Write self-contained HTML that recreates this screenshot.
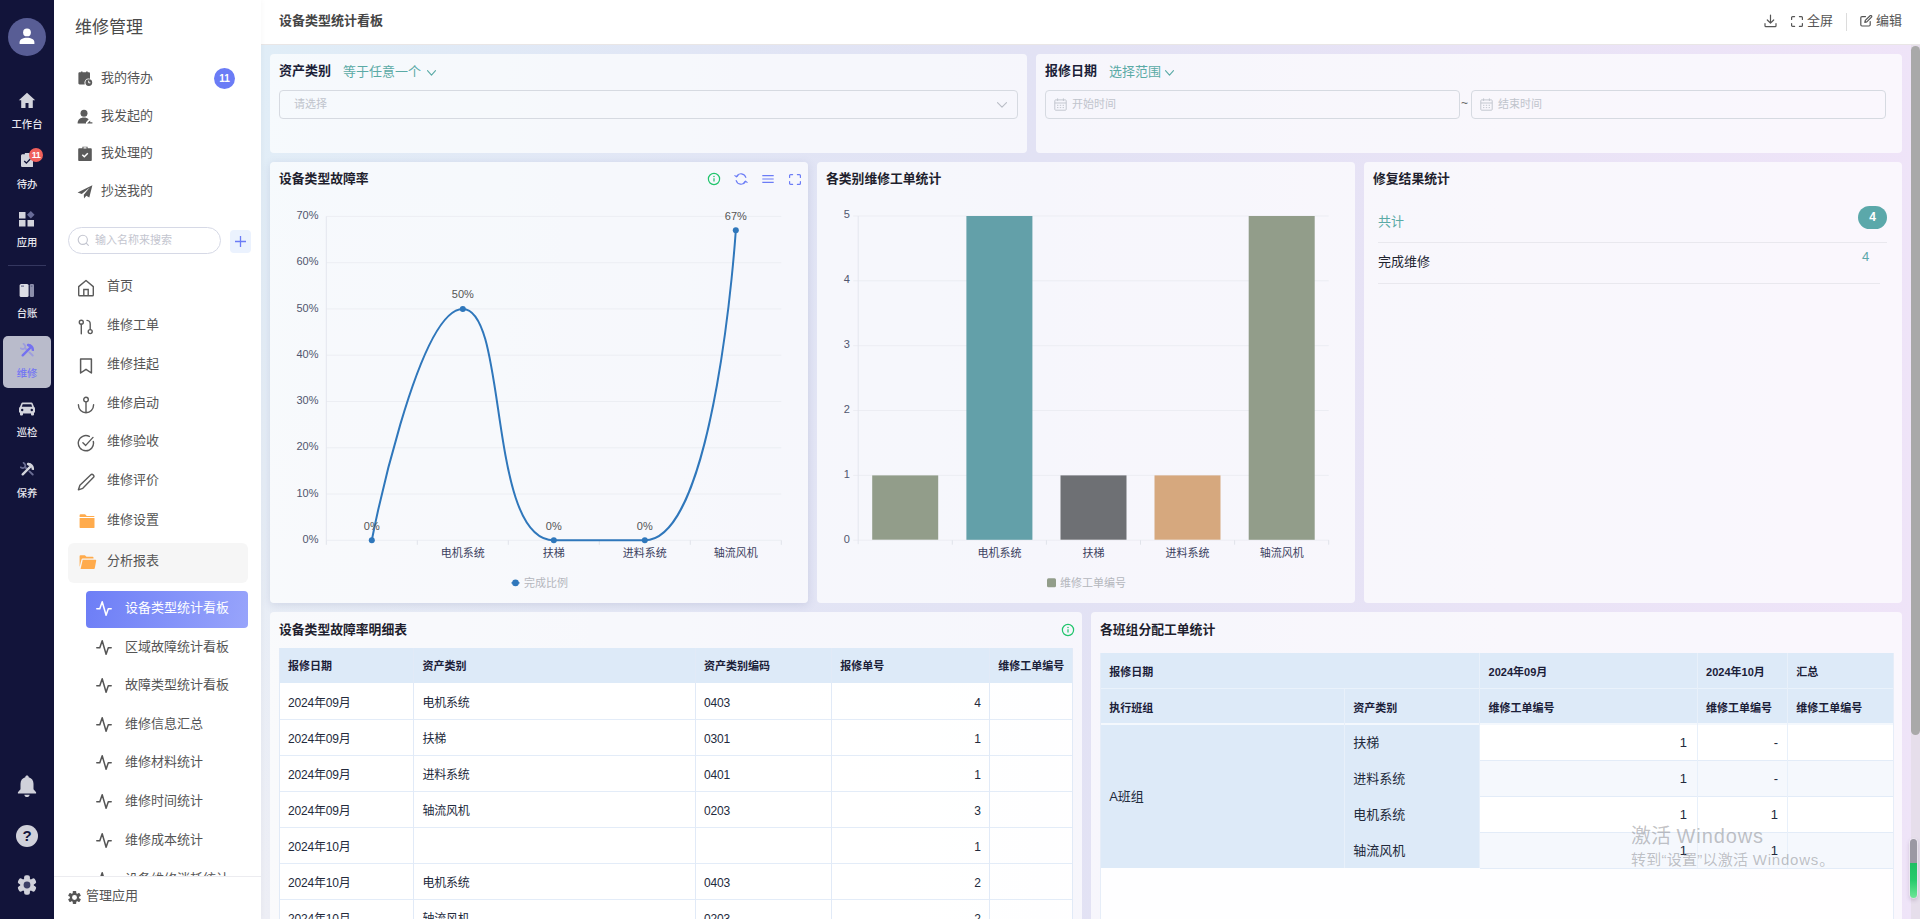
<!DOCTYPE html>
<html lang="zh-CN">
<head>
<meta charset="utf-8">
<title>设备类型统计看板</title>
<style>
*{box-sizing:border-box;margin:0;padding:0}
html,body{width:1920px;height:919px;overflow:hidden;background:#fff}
body{font-family:"Liberation Sans","Noto Sans CJK SC",sans-serif;font-size:13px;color:#333;position:relative}
.abs{position:absolute}
/* dark rail */
#rail{position:absolute;left:0;top:0;width:54px;height:919px;background:#12143a}
#rail .it{position:absolute;left:0;width:54px;text-align:center;color:#e6e6ee;font-size:10.3px;line-height:14px;font-weight:500}
#rail svg{display:block;margin:0 auto}
/* side menu */
#side{position:absolute;left:54px;top:0;width:207px;height:919px;background:#fff;box-shadow:1px 0 5px rgba(0,0,0,.03);z-index:3}
#side .ttl{position:absolute;left:21px;top:15px;font-size:17px;color:#4a4a4a;line-height:26px}
#side .q{position:absolute;left:23px;height:24px;line-height:24px;font-size:13px;color:#555}
#side .q svg{position:absolute;left:-.5px;top:5px}
#side .q span{position:absolute;left:24px;top:0;white-space:nowrap}
#side .m{position:absolute;left:24px;height:24px;line-height:24px;font-size:13px;color:#555;white-space:nowrap}
#side .m svg{position:absolute;left:-1px;top:4.500px}
#side .m span{position:absolute;left:29px;top:0}
#side .s{position:absolute;left:42px;height:24px;line-height:24px;font-size:13px;color:#555;white-space:nowrap}
#side .s svg{position:absolute;left:0;top:3.500px}
#side .s span{position:absolute;left:29px;top:0}
/* main */
#hdr{position:absolute;left:261px;top:0;width:1659px;height:45px;background:#fff;border-bottom:1px solid #e9e6e6}
#main{position:absolute;left:261px;top:45px;width:1659px;height:874px;background:linear-gradient(90deg,rgba(225,226,244,0) 0%,rgba(225,226,244,.75) 30%,rgba(226,226,244,1) 47%,#e9e3f6 75%,#efe4f8 100%),linear-gradient(180deg,#e0edf7 0%,#e6edf6 50%,#edeef5 100%);overflow:hidden}
.card{position:absolute;border-radius:4px;background:rgba(255,255,255,.7)}
.ct{position:absolute;font-size:12.8px;font-weight:bold;color:#1f1f2e;line-height:18px;white-space:nowrap}
#c{position:absolute;left:0;top:0;width:1920px;height:919px;overflow:hidden}
.lbl{position:absolute;font-size:13px;font-weight:bold;color:#1b1e38;line-height:20px;white-space:nowrap}
.lk{position:absolute;font-size:13px;color:#5aaaa6;line-height:20px;white-space:nowrap}
.inp{position:absolute;height:29px;border:1px solid #d6dae1;border-radius:4px}
.ph{position:absolute;font-size:11px;line-height:18px;color:#c0c4cc;white-space:nowrap}
.th{position:absolute;font-size:11px;font-weight:bold;color:#1b2038;line-height:18px;white-space:nowrap}
.td{position:absolute;font-size:12px;color:#232a3c;line-height:18px;white-space:nowrap;letter-spacing:-.2px}
.td2{position:absolute;font-size:13px;color:#232a3c;line-height:20px;white-space:nowrap}
</style>
</head>
<body>
<div id="rail">
  <div class="abs" style="left:8px;top:18px;width:38px;height:38px;border-radius:50%;background:#585d95"></div>
  <svg class="abs" style="left:17px;top:26px" width="20" height="20" viewBox="0 0 20 20"><circle cx="10" cy="6.4" r="3.9" fill="#fff"/><path d="M2.6 18v-1.6c0-3 3.3-4.6 7.4-4.6s7.4 1.600 7.400 4.600V18z" fill="#fff"/></svg>
  <!-- home -->
  <svg class="abs" style="left:18px;top:92px" width="18" height="17" viewBox="0 0 18 17"><path d="M9 .8L.8 8.300h2.400V16h4.300v-5h3V16h4.300V8.300h2.400z" fill="#d3d4dc"/></svg>
  <div class="it" style="top:118px">工作台</div>
  <!-- todo -->
  <svg class="abs" style="left:20.500px;top:153px" width="12.500" height="14.300" viewBox="0 0 14 16"><path d="M4.300 0h5.400v1.500h2.600c.9 0 1.700.8 1.700 1.700v11c0 .9-.8 1.700-1.700 1.700H1.700C.8 15.900 0 15.100 0 14.200v-11c0-.9.8-1.700 1.700-1.700h2.600z" fill="#d3d4dc"/><path d="M3.600 9l2.400 2.300 4.400-4.600" fill="none" stroke="#12143a" stroke-width="1.500"/></svg>
  <div class="abs" style="left:29px;top:148px;width:14px;height:14px;border-radius:50%;background:#f0605b;color:#fff;font-size:9px;line-height:14px;text-align:center;font-weight:bold;letter-spacing:-.5px">11</div>
  <div class="it" style="top:178px">待办</div>
  <!-- apps -->
  <svg class="abs" style="left:19px;top:211px" width="16" height="16" viewBox="0 0 16 16"><rect x="0" y="1" width="6.500" height="6.500" fill="#d3d4dc"/><rect x="0" y="9" width="6.500" height="6.500" fill="#d3d4dc"/><rect x="8.500" y="9" width="6.500" height="6.500" fill="#d3d4dc"/><path d="M11.800 0l3.800 3.800-3.800 3.800L8 3.800z" fill="#686c98"/></svg>
  <div class="it" style="top:236px">应用</div>
  <div class="abs" style="left:8px;top:265px;width:38px;height:1px;background:#34375f"></div>
  <!-- ledger -->
  <svg class="abs" style="left:19px;top:284px" width="16" height="13" viewBox="0 0 16 13"><rect x=".6" y="0" width="9" height="13" rx="1.500" fill="#dcdde4"/><rect x="2" y="1.600" width="3" height="1" fill="#555a80"/><rect x="10.800" y="0" width="4.200" height="13" rx="1.200" fill="#8c8fab"/><rect x="11.800" y="1.600" width="1.600" height="1" fill="#555a80"/></svg>
  <div class="it" style="top:307px">台账</div>
  <!-- active -->
  <div class="abs" style="left:3px;top:336px;width:48px;height:52px;border-radius:5px;background:#b9bbcb"></div>
  <svg class="abs" style="left:20px;top:343px" width="14" height="14" viewBox="0 0 14 14"><g fill="none" stroke-linecap="round"><path d="M3.500 .8c1.700 1.300 2.300 2.900 1.400 4.300-1 1.300-2.600 1.300-4.300 .2" stroke="#9d9dde" stroke-width="1.700"/><path d="M5.200 5.300l1.600 1.500M9.500 9.400l3.200 3.100" stroke="#9d9dde" stroke-width="1.900"/><path d="M2.700 12.400L10.400 4.600" stroke="#7471f0" stroke-width="2.300"/><path d="M8.300 2c2.600.4 4.700 2.600 4.600 5.900" stroke="#7471f0" stroke-width="2.400" stroke-linecap="butt"/><path d="M8.100 2.100l1.200.3" stroke="#7471f0" stroke-width="2.600"/></g></svg>
  <div class="it" style="top:367px;color:#7577f2">维修</div>
  <!-- car -->
  <svg class="abs" style="left:19px;top:402px" width="16" height="14" viewBox="0 0 16 14"><path d="M3.600.6h8.800c.6 0 1.100.3 1.300.9L15 4.800c.6.300 1 .9 1 1.600v4.200h-1v2c0 .5-.4.900-.9.900h-1.200c-.5 0-.9-.4-.9-.9v-1H4v1c0 .5-.4.900-.9.900H1.900c-.5 0-.9-.4-.9-.9v-2H0V6.400c0-.7.400-1.300 1-1.600l1.300-3.300c.2-.6.700-.9 1.300-.9zM3.700 2.200L2.800 4.700h10.400l-.9-2.500z" fill="#d3d4dc" fill-rule="evenodd"/><circle cx="3.200" cy="8" r="1.200" fill="#12143a"/><circle cx="12.800" cy="8" r="1.200" fill="#12143a"/></svg>
  <div class="it" style="top:426px">巡检</div>
  <!-- maintain -->
  <svg class="abs" style="left:20px;top:462px" width="14" height="14" viewBox="0 0 14 14"><g fill="none" stroke-linecap="round"><path d="M3.500 .8c1.700 1.300 2.300 2.900 1.400 4.300-1 1.300-2.600 1.300-4.300 .2" stroke="#6a6d93" stroke-width="1.700"/><path d="M5.200 5.300l1.600 1.500M9.500 9.400l3.200 3.100" stroke="#6a6d93" stroke-width="1.900"/><path d="M2.700 12.400L10.400 4.600" stroke="#d3d4dc" stroke-width="2.300"/><path d="M8.300 2c2.600.4 4.700 2.600 4.600 5.900" stroke="#d3d4dc" stroke-width="2.400" stroke-linecap="butt"/><path d="M8.100 2.100l1.200.3" stroke="#d3d4dc" stroke-width="2.600"/></g></svg>
  <div class="it" style="top:487px">保养</div>
  <!-- bell -->
  <svg class="abs" style="left:17px;top:775px" width="20" height="23" viewBox="0 0 20 23"><path d="M10 .6c1 0 1.700.7 1.700 1.600 3 .8 4.800 3.300 4.800 6.500v5.600l2.600 3v1.300H.9v-1.300l2.600-3V8.700c0-3.200 1.800-5.700 4.800-6.500C8.300 1.300 9 .6 10 .6z" fill="#d0d1da"/><path d="M7.300 19.800h5.400c-.3 1.400-1.300 2.300-2.700 2.300s-2.400-.9-2.700-2.300z" fill="#d0d1da"/></svg>
  <!-- help -->
  <div class="abs" style="left:16px;top:825px;width:22px;height:22px;border-radius:50%;background:#d0d1da;color:#12143a;font-size:15px;font-weight:bold;line-height:22px;text-align:center">?</div>
  <!-- gear -->
  <svg class="abs" style="left:17px;top:875px" width="20" height="20" viewBox="-10 -10 20 20"><g fill="#d0d1da"><circle r="6.800"/><rect x="-2.900" y="-9.700" width="5.800" height="6" rx="2" transform="rotate(0)"/><rect x="-2.900" y="-9.700" width="5.800" height="6" rx="2" transform="rotate(60)"/><rect x="-2.900" y="-9.700" width="5.800" height="6" rx="2" transform="rotate(120)"/><rect x="-2.900" y="-9.700" width="5.800" height="6" rx="2" transform="rotate(180)"/><rect x="-2.900" y="-9.700" width="5.800" height="6" rx="2" transform="rotate(240)"/><rect x="-2.900" y="-9.700" width="5.800" height="6" rx="2" transform="rotate(300)"/></g><circle r="3.400" fill="#3c3f66"/></svg>
</div>
<div id="side"><div class="ttl">维修管理</div>
<div class="q" style="top:66px"><svg width="16" height="16" viewBox="0 0 16 16"><path d="M2.600 1.200h1.300V.5h1.600v.7h3.600V.5h1.600v.7h1.100c.7 0 1.200.5 1.200 1.200v5.300a4.300 4.300 0 0 0-5.300 5.800H2.600c-.7 0-1.200-.5-1.200-1.200V2.400c0-.7.500-1.200 1.200-1.200z" fill="#5a5a5a"/><circle cx="11.800" cy="11.600" r="3.400" fill="#5a5a5a"/><path d="M11.700 9.700v2.100h1.700" fill="none" stroke="#fff" stroke-width="1"/></svg><span>我的待办</span></div>
<div class="abs" style="left:160px;top:68px;width:21px;height:21px;border-radius:50%;background:#6b7cf6;color:#fff;font-size:10px;font-weight:bold;line-height:21px;text-align:center">11</div>
<div class="q" style="top:104px"><svg width="16" height="16" viewBox="0 0 16 16"><circle cx="7" cy="4.200" r="3.500" fill="#5a5a5a"/><path d="M.6 14.600c0-4 2.800-6 6.400-6 1.900 0 3.500.6 4.700 1.700L9 13.300v1.300z" fill="#5a5a5a"/><path d="M10 14.600l3.200-3 0 1.600h2.200v1.400z" fill="#5a5a5a"/></svg><span>我发起的</span></div>
<div class="q" style="top:141px"><svg width="16" height="16" viewBox="0 0 16 16"><path d="M5.400.8h5.200v1.500h3.100c.6 0 1.100.5 1.100 1.100v10.600c0 .6-.5 1.100-1.100 1.100H2.300c-.6 0-1.100-.5-1.100-1.100V3.400c0-.6.500-1.100 1.100-1.100h3.100z" fill="#5a5a5a"/><rect x="6.500" y="1.300" width="3" height="1.200" fill="#fff"/><path d="M5.300 8.800l2 2 3.500-3.600" fill="none" stroke="#fff" stroke-width="1.500"/></svg><span>我处理的</span></div>
<div class="q" style="top:179px"><svg width="16" height="16" viewBox="0 0 16 16"><path d="M15.400 1.200L.6 8.600l4.200 1.300 8-6.400-6 7.300.2 3.600 2.300-2.600 3 1.600z" fill="#5a5a5a"/></svg><span>抄送我的</span></div>
<div class="abs" style="left:14px;top:227px;width:153px;height:27px;border:1px solid #d6d9e6;border-radius:14px"></div>
<svg class="abs" style="left:23px;top:234px" width="13" height="13" viewBox="0 0 13 13"><circle cx="5.800" cy="5.800" r="4.600" fill="none" stroke="#c3c5cf" stroke-width="1.100"/><path d="M9.200 9.200l2.200 2.200" stroke="#c3c5cf" stroke-width="1.100" stroke-linecap="round"/></svg>
<div class="abs" style="left:41px;top:231px;font-size:11px;line-height:18px;color:#c3c5cf;white-space:nowrap">输入名称来搜索</div>
<div class="abs" style="left:176px;top:230px;width:21px;height:23px;border-radius:4px;background:#ebf2fe"></div>
<svg class="abs" style="left:181px;top:236px" width="11" height="11" viewBox="0 0 11 11"><path d="M5.500 0v11M0 5.500h11" stroke="#6b7cf6" stroke-width="1.300"/></svg>
<div class="m" style="top:274px"><svg width="18" height="18" viewBox="0 0 18 18"><path d="M1.700 7.600L9 1.500l7.300 6.100v8.300a.9.900 0 0 1-.9.900H2.600a.9.900 0 0 1-.9-.9z" fill="none" stroke="#5a5a5a" stroke-width="1.400" stroke-linejoin="round"/><path d="M6.800 16.500v-6h4.400v6" fill="none" stroke="#5a5a5a" stroke-width="1.400"/></svg><span>首页</span></div>
<div class="m" style="top:313px"><svg width="18" height="18" viewBox="0 0 18 18"><g fill="none" stroke="#5a5a5a" stroke-width="1.400" stroke-linecap="round"><circle cx="4.300" cy="4.200" r="2"/><path d="M4.300 6.300v9.500"/><circle cx="13.200" cy="13.600" r="2"/><path d="M10 2.400c2.300.2 3.200 1.400 3.200 3.600v5.500"/></g></svg><span>维修工单</span></div>
<div class="m" style="top:352px"><svg width="18" height="18" viewBox="0 0 18 18"><path d="M3.600 2h10.800v14l-5.400-3.700L3.600 16z" fill="none" stroke="#5a5a5a" stroke-width="1.500" stroke-linejoin="round"/></svg><span>维修挂起</span></div>
<div class="m" style="top:391px"><svg width="18" height="18" viewBox="0 0 18 18"><g fill="none" stroke="#5a5a5a" stroke-width="1.400" stroke-linecap="round"><circle cx="9" cy="3.600" r="2.300"/><path d="M9 6v10.800M1.400 8.800c0 4.600 3.400 8 7.600 8s7.600-3.400 7.600-8"/></g></svg><span>维修启动</span></div>
<div class="m" style="top:429px"><svg width="18" height="18" viewBox="0 0 18 18"><g fill="none" stroke="#5a5a5a" stroke-width="1.400" stroke-linecap="round" stroke-linejoin="round"><path d="M16.300 7.500A7.600 7.600 0 1 1 12.300 2.400"/><path d="M5.900 8.800l2.800 2.600 7.300-8"/></g></svg><span>维修验收</span></div>
<div class="m" style="top:468px"><svg width="18" height="18" viewBox="0 0 18 18"><path d="M1.400 16.800l1.500-4.600L13.600 1.900a1.900 1.900 0 0 1 2.700 2.700L5.800 15.300z" fill="none" stroke="#5a5a5a" stroke-width="1.400" stroke-linejoin="round"/></svg><span>维修评价</span></div>
<div class="m" style="top:508px"><svg style="left:0;top:3.500px" width="18" height="18" viewBox="0 0 18 18"><path d="M1.600 3.200c0-.5.400-.9.900-.9h4.600l1.600 1.600h6.900c.5 0 .9.400.9.900V5H1.600z" fill="#ffab4c"/><path d="M1.600 6h14.900v9.200c0 .5-.4.900-.9.900H2.500c-.5 0-.9-.4-.9-.9z" fill="#ffab4c"/></svg><span>维修设置</span></div>
<div class="abs" style="left:14px;top:543px;width:180px;height:40px;border-radius:6px;background:#f6f6f6"></div>
<div class="m" style="top:549px"><svg style="left:0;top:3.500px" width="19" height="18" viewBox="0 0 19 18"><path d="M1.600 3.100c0-.5.400-.9.900-.9h4.400l1.600 1.500h6.100c.5 0 .9.400.9.900v1H4.800c-.6 0-1.100.4-1.300 1L1.600 14z" fill="#ffab4c"/><path d="M4.700 6.700h12.600c.6 0 1 .5.900 1.100l-1.400 7.500c-.1.500-.5.800-1 .8H2.600z" fill="#ffab4c"/></svg><span>分析报表</span></div>
<div class="abs" style="left:32px;top:591px;width:162px;height:37px;border-radius:4px;background:linear-gradient(100deg,#6d7ef6 0%,#8493f9 55%,#98a4fb 100%)"></div>
<div class="s" style="top:596px;color:#fff"><svg width="16" height="17" viewBox="0 0 16 17"><path d="M.8 8.800h3L6.200 1.700l3.900 13.600 2.200-6.500h2.900" fill="none" stroke="#fff" stroke-width="1.500" stroke-linejoin="round" stroke-linecap="round"/></svg><span>设备类型统计看板</span></div>
<div class="s" style="top:635px"><svg width="16" height="17" viewBox="0 0 16 17"><path d="M.8 8.800h3L6.200 1.700l3.900 13.600 2.200-6.500h2.900" fill="none" stroke="#555" stroke-width="1.500" stroke-linejoin="round" stroke-linecap="round"/></svg><span>区域故障统计看板</span></div>
<div class="s" style="top:673px"><svg width="16" height="17" viewBox="0 0 16 17"><path d="M.8 8.800h3L6.200 1.700l3.900 13.600 2.200-6.500h2.900" fill="none" stroke="#555" stroke-width="1.500" stroke-linejoin="round" stroke-linecap="round"/></svg><span>故障类型统计看板</span></div>
<div class="s" style="top:712px"><svg width="16" height="17" viewBox="0 0 16 17"><path d="M.8 8.800h3L6.200 1.700l3.900 13.600 2.200-6.500h2.900" fill="none" stroke="#555" stroke-width="1.500" stroke-linejoin="round" stroke-linecap="round"/></svg><span>维修信息汇总</span></div>
<div class="s" style="top:750px"><svg width="16" height="17" viewBox="0 0 16 17"><path d="M.8 8.800h3L6.200 1.700l3.900 13.600 2.200-6.500h2.900" fill="none" stroke="#555" stroke-width="1.500" stroke-linejoin="round" stroke-linecap="round"/></svg><span>维修材料统计</span></div>
<div class="s" style="top:789px"><svg width="16" height="17" viewBox="0 0 16 17"><path d="M.8 8.800h3L6.200 1.700l3.900 13.600 2.200-6.500h2.900" fill="none" stroke="#555" stroke-width="1.500" stroke-linejoin="round" stroke-linecap="round"/></svg><span>维修时间统计</span></div>
<div class="s" style="top:828px"><svg width="16" height="17" viewBox="0 0 16 17"><path d="M.8 8.800h3L6.200 1.700l3.900 13.600 2.200-6.500h2.900" fill="none" stroke="#555" stroke-width="1.500" stroke-linejoin="round" stroke-linecap="round"/></svg><span>维修成本统计</span></div>
<div class="s" style="top:867px"><svg width="16" height="17" viewBox="0 0 16 17"><path d="M.8 8.800h3L6.200 1.700l3.900 13.600 2.200-6.500h2.900" fill="none" stroke="#555" stroke-width="1.500" stroke-linejoin="round" stroke-linecap="round"/></svg><span>设备维修消耗统计</span></div>
<div class="abs" style="left:0;top:876px;width:207px;height:43px;background:#fff;border-top:1px solid #ececf0"></div>
<svg class="abs" style="left:14px;top:891px" width="13" height="13" viewBox="-10 -10 20 20"><g fill="#555"><circle r="7"/><rect x="-2.700" y="-10" width="5.400" height="5" rx="1" transform="rotate(0)"/><rect x="-2.700" y="-10" width="5.400" height="5" rx="1" transform="rotate(60)"/><rect x="-2.700" y="-10" width="5.400" height="5" rx="1" transform="rotate(120)"/><rect x="-2.700" y="-10" width="5.400" height="5" rx="1" transform="rotate(180)"/><rect x="-2.700" y="-10" width="5.400" height="5" rx="1" transform="rotate(240)"/><rect x="-2.700" y="-10" width="5.400" height="5" rx="1" transform="rotate(300)"/></g><circle r="3.800" fill="#fff"/></svg>
<div class="abs" style="left:32px;top:884px;font-size:13px;line-height:24px;color:#555;white-space:nowrap">管理应用</div>
</div>
<div id="hdr"><div class="abs" style="left:18px;top:11px;font-size:13px;font-weight:bold;color:#454545;line-height:20px;white-space:nowrap">设备类型统计看板</div>
<svg class="abs" style="left:1503px;top:14px" width="13" height="14" viewBox="0 0 13 14"><g fill="none" stroke="#555" stroke-width="1.200" stroke-linecap="round" stroke-linejoin="round"><path d="M6.500 1v8M3.300 6l3.200 3.200L9.700 6M1 9.500v2.200c0 .5.400.900.900.900h9.200c.5 0 .9-.4.900-.9V9.500"/></g></svg>
<svg class="abs" style="left:1530px;top:16px" width="12" height="11" viewBox="0 0 12 11"><g fill="none" stroke="#555" stroke-width="1.200" stroke-linecap="round"><path d="M.6 3.400V1.600a1 1 0 0 1 1-1h2M8.400.6h2a1 1 0 0 1 1 1v1.800M11.400 7.600v1.800a1 1 0 0 1-1 1h-2M3.600 10.400h-2a1 1 0 0 1-1-1V7.600"/></g></svg>
<div class="abs" style="left:1546px;top:11px;font-size:13px;color:#555;line-height:20px;white-space:nowrap">全屏</div>
<div class="abs" style="left:1585px;top:13px;width:1px;height:18px;background:#dcdcdc"></div>
<svg class="abs" style="left:1599px;top:15px" width="13" height="12" viewBox="0 0 13 12"><g fill="none" stroke="#555" stroke-width="1.200" stroke-linecap="round" stroke-linejoin="round"><path d="M5.500 1.600H2a1.200 1.200 0 0 0-1.200 1.200v7A1.200 1.200 0 0 0 2 11h7a1.200 1.200 0 0 0 1.200-1.200V6.500"/><path d="M4.800 7.400l.5-2L10.100.7a1 1 0 0 1 1.400 1.400L6.800 6.900z"/></g></svg>
<div class="abs" style="left:1615px;top:11px;font-size:13px;color:#555;line-height:20px;white-space:nowrap">编辑</div>
</div>
<div id="main"></div>
<div id="c">
<div class="card" style="left:270px;top:54px;width:757px;height:99px"></div>
<div class="card" style="left:1036px;top:54px;width:866px;height:99px"></div>
<div class="card" style="left:270px;top:162px;width:538px;height:441px;box-shadow:0 2px 8px rgba(100,110,160,.18)"></div>
<div class="card" style="left:817px;top:162px;width:538px;height:441px"></div>
<div class="card" style="left:1364px;top:162px;width:538px;height:441px"></div>
<div class="card" style="left:270px;top:612px;width:812px;height:320px"></div>
<div class="card" style="left:1091px;top:612px;width:811px;height:320px"></div>
<div class="lbl" style="left:279px;top:61px">资产类别</div>
<div class="lk" style="left:343px;top:62px">等于任意一个</div>
<svg class="abs" style="left:427px;top:70px" width="9" height="6" viewBox="0 0 9 6"><path d="M.5 .7L4.5 5.2L8.5 .7" fill="none" stroke="#5aaaa6" stroke-width="1.1" stroke-linecap="round" stroke-linejoin="round"/></svg>
<div class="inp" style="left:279px;top:90px;width:739px"></div>
<div class="ph" style="left:294px;top:95px">请选择</div>
<svg class="abs" style="left:997px;top:102px" width="10" height="6" viewBox="0 0 10 6"><path d="M.5 .7L5.0 5.2L9.5 .7" fill="none" stroke="#b9bdc6" stroke-width="1.1" stroke-linecap="round" stroke-linejoin="round"/></svg>
<div class="lbl" style="left:1045px;top:61px">报修日期</div>
<div class="lk" style="left:1109px;top:62px">选择范围</div>
<svg class="abs" style="left:1165px;top:70px" width="9" height="6" viewBox="0 0 9 6"><path d="M.5 .7L4.5 5.2L8.5 .7" fill="none" stroke="#5aaaa6" stroke-width="1.1" stroke-linecap="round" stroke-linejoin="round"/></svg>
<div class="inp" style="left:1045px;top:90px;width:415px"></div>
<svg class="abs" style="left:1054px;top:98px" width="13" height="13" viewBox="0 0 13 13"><g fill="none" stroke="#c3c7cf" stroke-width="1"><rect x=".8" y="1.900" width="11.400" height="10.300" rx=".8"/><path d="M.8 5h11.400M3.600 .4v2.600M9.400 .4v2.600"/><path d="M3 7.300h7M3 9.600h7" stroke-dasharray="1.400 1.400"/></g></svg>
<div class="ph" style="left:1072px;top:95px">开始时间</div>
<div class="abs" style="left:1461px;top:94px;font-size:12px;line-height:18px;color:#666">~</div>
<div class="inp" style="left:1471px;top:90px;width:415px"></div>
<svg class="abs" style="left:1480px;top:98px" width="13" height="13" viewBox="0 0 13 13"><g fill="none" stroke="#c3c7cf" stroke-width="1"><rect x=".8" y="1.900" width="11.400" height="10.300" rx=".8"/><path d="M.8 5h11.400M3.600 .4v2.600M9.400 .4v2.600"/><path d="M3 7.300h7M3 9.600h7" stroke-dasharray="1.400 1.400"/></g></svg>
<div class="ph" style="left:1498px;top:95px">结束时间</div>
<div class="ct" style="left:279px;top:170px">设备类型故障率</div>
<div class="ct" style="left:826px;top:170px">各类别维修工单统计</div>
<div class="ct" style="left:1373px;top:170px">修复结果统计</div>
<div class="ct" style="left:279px;top:621px">设备类型故障率明细表</div>
<div class="ct" style="left:1100px;top:621px">各班组分配工单统计</div>
<svg class="abs" style="left:707px;top:172px" width="14" height="14" viewBox="0 0 14 14"><circle cx="7" cy="7" r="5.600" fill="none" stroke="#1fc46b" stroke-width="1.200"/><path d="M7 6.200v3.400" stroke="#1fc46b" stroke-width="1.200"/><circle cx="7" cy="4.500" r=".75" fill="#1fc46b"/></svg>
<svg class="abs" style="left:734px;top:172px" width="14" height="14" viewBox="0 0 14 14"><g fill="none" stroke="#6b7cf6" stroke-width="1.200" stroke-linecap="round" stroke-linejoin="round"><path d="M11.800 5.400A5 5 0 0 0 2.600 4.400M2.200 8.600a5 5 0 0 0 9.200 1"/><path d="M.9 3.600l1.600 1.300 1.500-1.500M13.100 10.400l-1.600-1.300-1.500 1.500"/></g></svg>
<svg class="abs" style="left:762px;top:174px" width="12" height="10" viewBox="0 0 12 10"><path d="M.3 1.600h11.400M.3 5h11.400M.3 8.400h11.400" stroke="#6b7cf6" stroke-width="1.100"/></svg>
<svg class="abs" style="left:789px;top:174px" width="12" height="11" viewBox="0 0 12 11"><g fill="none" stroke="#6b7cf6" stroke-width="1.200" stroke-linecap="round"><path d="M.6 3.400V1.600a1 1 0 0 1 1-1h2M8.400.6h2a1 1 0 0 1 1 1v1.800M11.400 7.600v1.800a1 1 0 0 1-1 1h-2M3.600 10.400h-2a1 1 0 0 1-1-1V7.600"/></g></svg>
<svg class="abs" style="left:1061px;top:623px" width="14" height="14" viewBox="0 0 14 14"><circle cx="7" cy="7" r="5.600" fill="none" stroke="#1fc46b" stroke-width="1.200"/><path d="M7 6.200v3.400" stroke="#1fc46b" stroke-width="1.200"/><circle cx="7" cy="4.500" r=".75" fill="#1fc46b"/></svg>
<svg class="abs" style="left:270px;top:162px" width="538" height="441" viewBox="270 162 538 441" font-family="Liberation Sans, Noto Sans CJK SC, sans-serif"><path d="M326.3 540.3H781.300" stroke="#eceef3" stroke-width="1"/><text x="318.500" y="542.9" font-size="11" fill="#50566e" text-anchor="end">0%</text><path d="M326.3 494.0H781.300" stroke="#eceef3" stroke-width="1"/><text x="318.500" y="496.6" font-size="11" fill="#50566e" text-anchor="end">10%</text><path d="M326.3 447.8H781.300" stroke="#eceef3" stroke-width="1"/><text x="318.500" y="450.4" font-size="11" fill="#50566e" text-anchor="end">20%</text><path d="M326.3 401.5H781.300" stroke="#eceef3" stroke-width="1"/><text x="318.500" y="404.1" font-size="11" fill="#50566e" text-anchor="end">30%</text><path d="M326.3 355.2H781.300" stroke="#eceef3" stroke-width="1"/><text x="318.500" y="357.8" font-size="11" fill="#50566e" text-anchor="end">40%</text><path d="M326.3 308.9H781.300" stroke="#eceef3" stroke-width="1"/><text x="318.500" y="311.5" font-size="11" fill="#50566e" text-anchor="end">50%</text><path d="M326.3 262.7H781.300" stroke="#eceef3" stroke-width="1"/><text x="318.500" y="265.3" font-size="11" fill="#50566e" text-anchor="end">60%</text><path d="M326.3 216.4H781.300" stroke="#eceef3" stroke-width="1"/><text x="318.500" y="219.0" font-size="11" fill="#50566e" text-anchor="end">70%</text><path d="M326.3 216.4V540.3" stroke="#e4e7ee" stroke-width="1"/><path d="M326.3 540.3v4.500" stroke="#e0e3ea" stroke-width="1"/><path d="M417.3 540.3v4.500" stroke="#e0e3ea" stroke-width="1"/><path d="M508.3 540.3v4.500" stroke="#e0e3ea" stroke-width="1"/><path d="M599.3 540.3v4.500" stroke="#e0e3ea" stroke-width="1"/><path d="M690.3 540.3v4.500" stroke="#e0e3ea" stroke-width="1"/><path d="M781.3 540.3v4.500" stroke="#e0e3ea" stroke-width="1"/><text x="462.8" y="556.700" font-size="11" fill="#3c4160" text-anchor="middle">电机系统</text><text x="553.8" y="556.700" font-size="11" fill="#3c4160" text-anchor="middle">扶梯</text><text x="644.8" y="556.700" font-size="11" fill="#3c4160" text-anchor="middle">进料系统</text><text x="735.8" y="556.700" font-size="11" fill="#3c4160" text-anchor="middle">轴流风机</text><path d="M371.8 540.3C371.8 540.3 417.3 308.9 462.8 308.9C508.3 308.9 487.2 540.3 553.8 540.3C578.2 540.3 624.8 540.3 644.8 540.3C715.8 540.3 735.8 230.3 735.8 230.3" fill="none" stroke="#2f77bb" stroke-width="2" stroke-linejoin="round"/><circle cx="371.8" cy="540.3" r="3" fill="#2f77bb"/><text x="371.8" y="529.7" font-size="11" fill="#555" text-anchor="middle">0%</text><circle cx="462.8" cy="308.9" r="3" fill="#2f77bb"/><text x="462.8" y="298.3" font-size="11" fill="#555" text-anchor="middle">50%</text><circle cx="553.8" cy="540.3" r="3" fill="#2f77bb"/><text x="553.8" y="529.7" font-size="11" fill="#555" text-anchor="middle">0%</text><circle cx="644.8" cy="540.3" r="3" fill="#2f77bb"/><text x="644.8" y="529.7" font-size="11" fill="#555" text-anchor="middle">0%</text><circle cx="735.8" cy="230.3" r="3" fill="#2f77bb"/><text x="735.8" y="219.7" font-size="11" fill="#555" text-anchor="middle">67%</text><path d="M511.500 582.900h8" stroke="#2f77bb" stroke-width="1.500"/><circle cx="515.500" cy="582.900" r="3.300" fill="#2f77bb"/><text x="524" y="586.600" font-size="11" fill="#b4b6bd">完成比例</text></svg>
<svg class="abs" style="left:817px;top:162px" width="538" height="441" viewBox="817 162 538 441" font-family="Liberation Sans, Noto Sans CJK SC, sans-serif"><path d="M853.2 540.2H1328.700" stroke="#ecedf3" stroke-width="1"/><text x="849.800" y="542.6" font-size="11" fill="#50566e" text-anchor="end">0</text><path d="M853.2 475.4H1328.700" stroke="#ecedf3" stroke-width="1"/><text x="849.800" y="477.8" font-size="11" fill="#50566e" text-anchor="end">1</text><path d="M853.2 410.5H1328.700" stroke="#ecedf3" stroke-width="1"/><text x="849.800" y="412.9" font-size="11" fill="#50566e" text-anchor="end">2</text><path d="M853.2 345.7H1328.700" stroke="#ecedf3" stroke-width="1"/><text x="849.800" y="348.1" font-size="11" fill="#50566e" text-anchor="end">3</text><path d="M853.2 280.8H1328.700" stroke="#ecedf3" stroke-width="1"/><text x="849.800" y="283.2" font-size="11" fill="#50566e" text-anchor="end">4</text><path d="M853.2 216.0H1328.700" stroke="#ecedf3" stroke-width="1"/><text x="849.800" y="218.4" font-size="11" fill="#50566e" text-anchor="end">5</text><path d="M858.2 216.0V544.2" stroke="#e4e6ee" stroke-width="1"/><path d="M952.3 540.2v4.500" stroke="#e0e3ea" stroke-width="1"/><path d="M1046.4 540.2v4.500" stroke="#e0e3ea" stroke-width="1"/><path d="M1140.5 540.2v4.500" stroke="#e0e3ea" stroke-width="1"/><path d="M1234.6 540.2v4.500" stroke="#e0e3ea" stroke-width="1"/><path d="M1328.7 540.2v4.500" stroke="#e0e3ea" stroke-width="1"/><rect x="872.2" y="475.4" width="66" height="64.3" fill="#929d8a"/><rect x="966.4" y="216.0" width="66" height="323.8" fill="#63a0a9"/><text x="999.4" y="556.700" font-size="11" fill="#3c4160" text-anchor="middle">电机系统</text><rect x="1060.5" y="475.4" width="66" height="64.3" fill="#6e7074"/><text x="1093.5" y="556.700" font-size="11" fill="#3c4160" text-anchor="middle">扶梯</text><rect x="1154.5" y="475.4" width="66" height="64.3" fill="#d6a87e"/><text x="1187.5" y="556.700" font-size="11" fill="#3c4160" text-anchor="middle">进料系统</text><rect x="1248.7" y="216.0" width="66" height="323.8" fill="#929d8a"/><text x="1281.7" y="556.700" font-size="11" fill="#3c4160" text-anchor="middle">轴流风机</text><rect x="1047" y="578.300" width="9" height="9" rx="1.500" fill="#929d8a"/><text x="1060" y="586.600" font-size="11" fill="#b4b6bd">维修工单编号</text></svg>
<div class="abs" style="left:1378px;top:212px;font-size:13px;line-height:20px;color:#5aaaa6">共计</div>
<div class="abs" style="left:1858px;top:206px;width:29px;height:23px;border-radius:12px;background:#5ba8aa;color:#fff;font-size:12px;font-weight:bold;line-height:23px;text-align:center">4</div>
<div class="abs" style="left:1378px;top:242px;width:509px;height:1px;background:#e9e8ee"></div>
<div class="abs" style="left:1378px;top:252px;font-size:13px;line-height:20px;color:#20232f">完成维修</div>
<div class="abs" style="left:1862px;top:247px;font-size:13px;line-height:20px;color:#5ba8aa">4</div>
<div class="abs" style="left:1378px;top:283px;width:502px;height:1px;background:#e9e8ee"></div>
<div class="abs" style="left:279px;top:648px;width:794px;height:271px;background:rgba(255,255,255,.9)"></div>
<div class="abs" style="left:279px;top:648px;width:794px;height:35px;background:#ddeaf8"></div>
<div class="th" style="left:288.0px;top:657px">报修日期</div>
<div class="th" style="left:422.4px;top:657px">资产类别</div>
<div class="th" style="left:704.0px;top:657px">资产类别编码</div>
<div class="th" style="left:840.3px;top:657px">报修单号</div>
<div class="th" style="left:998.2px;top:657px">维修工单编号</div>
<div class="abs" style="left:279px;top:719px;width:794px;height:1px;background:#e3ecf8"></div>
<div class="td" style="left:288.0px;top:693.5px">2024年09月</div>
<div class="td" style="left:422.4px;top:693.5px">电机系统</div>
<div class="td" style="left:704.0px;top:693.5px">0403</div>
<div class="td" style="left:831.3px;width:149.5px;text-align:right;top:693.5px">4</div>
<div class="abs" style="left:279px;top:755px;width:794px;height:1px;background:#e3ecf8"></div>
<div class="td" style="left:288.0px;top:729.5px">2024年09月</div>
<div class="td" style="left:422.4px;top:729.5px">扶梯</div>
<div class="td" style="left:704.0px;top:729.5px">0301</div>
<div class="td" style="left:831.3px;width:149.5px;text-align:right;top:729.5px">1</div>
<div class="abs" style="left:279px;top:791px;width:794px;height:1px;background:#e3ecf8"></div>
<div class="td" style="left:288.0px;top:765.5px">2024年09月</div>
<div class="td" style="left:422.4px;top:765.5px">进料系统</div>
<div class="td" style="left:704.0px;top:765.5px">0401</div>
<div class="td" style="left:831.3px;width:149.5px;text-align:right;top:765.5px">1</div>
<div class="abs" style="left:279px;top:827px;width:794px;height:1px;background:#e3ecf8"></div>
<div class="td" style="left:288.0px;top:801.5px">2024年09月</div>
<div class="td" style="left:422.4px;top:801.5px">轴流风机</div>
<div class="td" style="left:704.0px;top:801.5px">0203</div>
<div class="td" style="left:831.3px;width:149.5px;text-align:right;top:801.5px">3</div>
<div class="abs" style="left:279px;top:863px;width:794px;height:1px;background:#e3ecf8"></div>
<div class="td" style="left:288.0px;top:837.5px">2024年10月</div>
<div class="td" style="left:831.3px;width:149.5px;text-align:right;top:837.5px">1</div>
<div class="abs" style="left:279px;top:899px;width:794px;height:1px;background:#e3ecf8"></div>
<div class="td" style="left:288.0px;top:873.5px">2024年10月</div>
<div class="td" style="left:422.4px;top:873.5px">电机系统</div>
<div class="td" style="left:704.0px;top:873.5px">0403</div>
<div class="td" style="left:831.3px;width:149.5px;text-align:right;top:873.5px">2</div>
<div class="abs" style="left:279px;top:935px;width:794px;height:1px;background:#e3ecf8"></div>
<div class="td" style="left:288.0px;top:909.5px">2024年10月</div>
<div class="td" style="left:422.4px;top:909.5px">轴流风机</div>
<div class="td" style="left:704.0px;top:909.5px">0203</div>
<div class="td" style="left:831.3px;width:149.5px;text-align:right;top:909.5px">2</div>
<div class="abs" style="left:278.5px;top:648px;width:1px;height:271px;background:#e1eaf7"></div>
<div class="abs" style="left:412.9px;top:648px;width:1px;height:271px;background:#e1eaf7"></div>
<div class="abs" style="left:694.5px;top:648px;width:1px;height:271px;background:#e1eaf7"></div>
<div class="abs" style="left:830.8px;top:648px;width:1px;height:271px;background:#e1eaf7"></div>
<div class="abs" style="left:988.7px;top:648px;width:1px;height:271px;background:#e1eaf7"></div>
<div class="abs" style="left:1072.1px;top:648px;width:1px;height:271px;background:#e1eaf7"></div>
<div class="abs" style="left:1100px;top:653px;width:794px;height:266px;background:rgba(255,255,255,.85)"></div>
<div class="abs" style="left:1100px;top:653px;width:794px;height:71px;background:#ddeaf8"></div>
<div class="abs" style="left:1100px;top:724px;width:379.600px;height:144px;background:#ddeaf8"></div>
<div class="abs" style="left:1100px;top:688px;width:794px;height:1px;background:#eaf2fb"></div>
<div class="abs" style="left:1100px;top:723px;width:794px;height:2px;background:#f4f8fd"></div>
<div class="abs" style="left:1479.600px;top:725px;width:414.300px;height:35px;background:#ffffff"></div>
<div class="abs" style="left:1479.600px;top:760px;width:414.300px;height:1px;background:#e3ecf8"></div>
<div class="abs" style="left:1479.600px;top:761px;width:414.300px;height:35px;background:#f5f8fd"></div>
<div class="abs" style="left:1479.600px;top:796px;width:414.300px;height:1px;background:#e3ecf8"></div>
<div class="abs" style="left:1479.600px;top:797px;width:414.300px;height:35px;background:#ffffff"></div>
<div class="abs" style="left:1479.600px;top:832px;width:414.300px;height:1px;background:#e3ecf8"></div>
<div class="abs" style="left:1479.600px;top:833px;width:414.300px;height:35px;background:#f5f8fd"></div>
<div class="abs" style="left:1479.600px;top:868px;width:414.300px;height:1px;background:#e3ecf8"></div>
<div class="th" style="left:1109.2px;top:663px">报修日期</div>
<div class="th" style="left:1488.6px;top:663px">2024年09月</div>
<div class="th" style="left:1706.1px;top:663px">2024年10月</div>
<div class="th" style="left:1796.3px;top:663px">汇总</div>
<div class="th" style="left:1109.2px;top:699px">执行班组</div>
<div class="th" style="left:1353.3px;top:699px">资产类别</div>
<div class="th" style="left:1488.6px;top:699px">维修工单编号</div>
<div class="th" style="left:1706.1px;top:699px">维修工单编号</div>
<div class="th" style="left:1796.3px;top:699px">维修工单编号</div>
<div class="td2" style="left:1109.2px;top:787px">A班组</div>
<div class="td2" style="left:1353.3px;top:733px">扶梯</div>
<div class="td2" style="left:1479.6px;width:207.4px;text-align:right;top:733px">1</div>
<div class="td2" style="left:1697.1px;width:80.9px;text-align:right;top:733px">-</div>
<div class="td2" style="left:1353.3px;top:769px">进料系统</div>
<div class="td2" style="left:1479.6px;width:207.4px;text-align:right;top:769px">1</div>
<div class="td2" style="left:1697.1px;width:80.9px;text-align:right;top:769px">-</div>
<div class="td2" style="left:1353.3px;top:805px">电机系统</div>
<div class="td2" style="left:1479.6px;width:207.4px;text-align:right;top:805px">1</div>
<div class="td2" style="left:1697.1px;width:80.9px;text-align:right;top:805px">1</div>
<div class="td2" style="left:1353.3px;top:841px">轴流风机</div>
<div class="td2" style="left:1479.6px;width:207.4px;text-align:right;top:841px">1</div>
<div class="td2" style="left:1697.1px;width:80.9px;text-align:right;top:841px">1</div>
<div class="abs" style="left:1343.8px;top:689px;width:1px;height:179px;background:#e8f0fa"></div>
<div class="abs" style="left:1479.1px;top:653px;width:1px;height:215px;background:#e8f0fa"></div>
<div class="abs" style="left:1696.6px;top:653px;width:1px;height:215px;background:#e8f0fa"></div>
<div class="abs" style="left:1786.8px;top:653px;width:1px;height:215px;background:#e8f0fa"></div>
<div class="abs" style="left:1893.4px;top:653px;width:1px;height:266px;background:#e6edf8"></div>
<div class="abs" style="left:1099.7px;top:653px;width:1px;height:266px;background:#e6edf8"></div>
<div class="abs" style="left:1631px;top:822px;font-size:20px;line-height:28px;color:rgba(120,120,125,.46);white-space:nowrap">激活 <span style="letter-spacing:.9px">Windows</span></div>
<div class="abs" style="left:1631px;top:849px;font-size:15px;line-height:22px;color:rgba(120,120,125,.46);white-space:nowrap;letter-spacing:.25px">转到“设置”以激活 <span style="letter-spacing:.8px">Windows</span>。</div>
<div class="abs" style="left:1911px;top:45px;width:9px;height:874px;background:#e6deeb"></div>
<div class="abs" style="left:1911px;top:46px;width:9px;height:689px;border-radius:5px 5px 5px 5px;background:#a9a9a9"></div>
<div class="abs" style="left:1910px;top:839px;width:7px;height:58.500px;border-radius:4px;background:linear-gradient(180deg,#9b98a3 0%,#9b98a3 40%,#1fbf63 41%,#27cb6c 70%,#6fe697 100%);box-shadow:0 0 0 .6px rgba(255,255,255,.8),0 2px 4px rgba(80,60,100,.3)"></div>
</div>
</body>
</html>
